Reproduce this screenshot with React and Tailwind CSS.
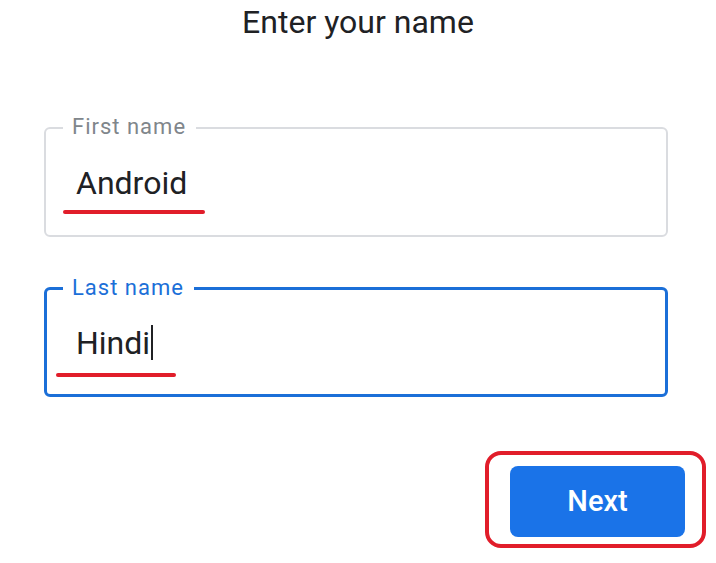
import React from "react";

export default function App() {
  return (
    <div className="relative w-[716px] h-[563px] overflow-hidden bg-white font-['Roboto',sans-serif] text-[#202124]">
      <div className="flex flex-col">
        <h1 className="mt-[4px] text-center text-[32px] leading-[36px] font-normal text-[#202124]">
          Enter your name
        </h1>

        <div className="ml-[44px] mr-[48px] mt-[87px] flex flex-col gap-[50px]">
          {/* First name */}
          <div className="relative h-[110px] rounded-[6px] border-2 border-[#dadce0] flex items-center pl-[30px]">
            <span className="absolute left-[17px] top-[-15px] bg-white pl-[9px] pr-[10px] text-[22px] leading-[26px] tracking-[1px] text-[#80868b]">
              First name
            </span>
            <span className="text-[32px] leading-[38px] pt-[1px]">Android</span>
          </div>

          {/* Last name */}
          <div className="relative h-[110px] rounded-[6px] border-[3px] border-[#1b6fd8] flex items-center pl-[29px]">
            <span className="absolute left-[16px] top-[-15px] bg-white pl-[9px] pr-[10px] text-[22px] leading-[26px] tracking-[1px] text-[#1b6fd8]">
              Last name
            </span>
            <span className="flex items-center text-[32px] leading-[38px] pt-[1px]">
              Hindi
              <span className="ml-[1px] inline-block w-[2px] h-[35px] bg-[#202124]" />
            </span>
          </div>
        </div>

        <div className="mt-[69px] mr-[31px] flex justify-end">
          <button className="w-[175px] h-[71px] rounded-[8px] bg-[#1a73e8] text-white text-[29px] font-medium">
            Next
          </button>
        </div>
      </div>

      {/* annotations */}
      <div className="absolute left-[63px] top-[210px] w-[142px] h-[4px] rounded-full bg-[#e11d2a]" />
      <div className="absolute left-[56px] top-[373px] w-[120px] h-[4px] rounded-full bg-[#e11d2a]" />
      <div className="absolute left-[485px] top-[451px] w-[221px] h-[97px] rounded-[16px] border-4 border-[#e11d2a]" />
    </div>
  );
}
